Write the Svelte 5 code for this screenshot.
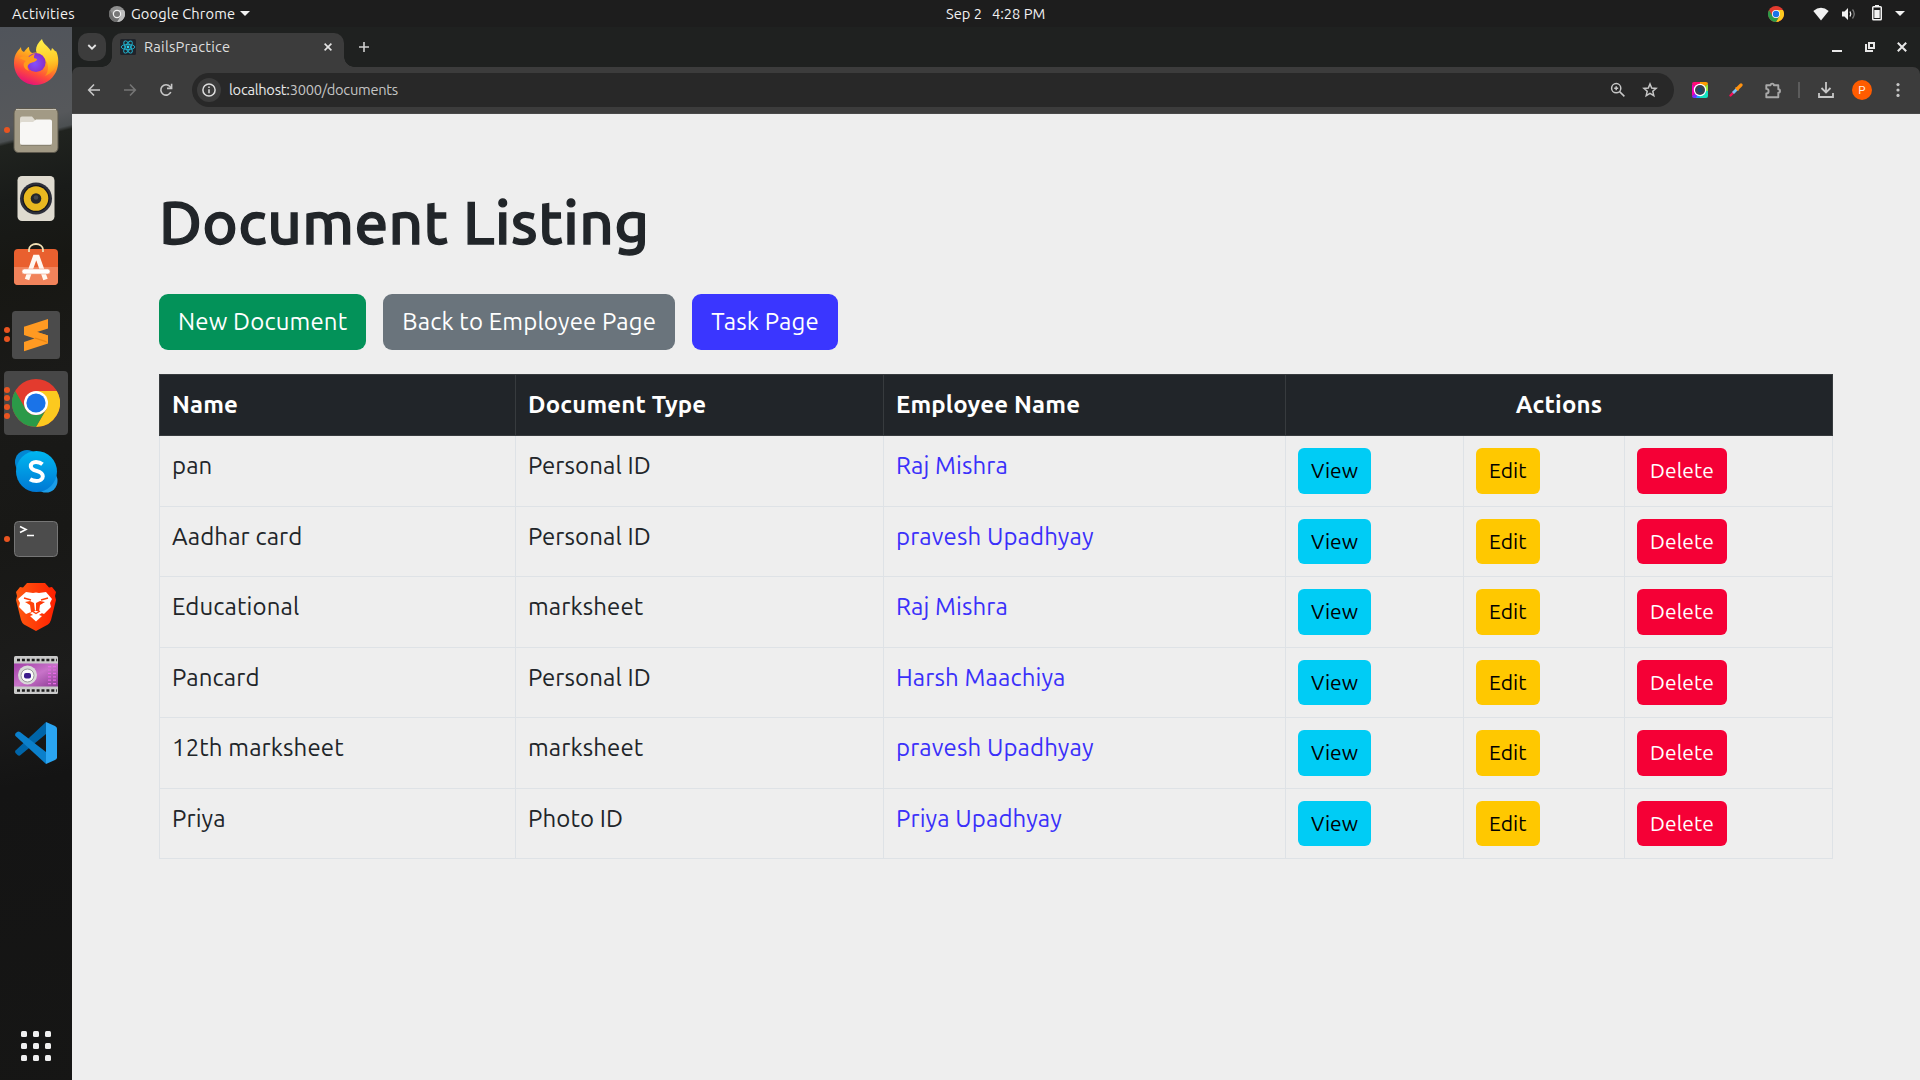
<script>
  const documents = [
    { name: 'pan', type: 'Personal ID', employee: 'Raj Mishra' },
    { name: 'Aadhar card', type: 'Personal ID', employee: 'pravesh Upadhyay' },
    { name: 'Educational', type: 'marksheet', employee: 'Raj Mishra' },
    { name: 'Pancard', type: 'Personal ID', employee: 'Harsh Maachiya' },
    { name: '12th marksheet', type: 'marksheet', employee: 'pravesh Upadhyay' },
    { name: 'Priya', type: 'Photo ID', employee: 'Priya Upadhyay' }
  ];

  // Launcher entries; `windows` is the number of open-window dots.
  const launchers = [
    { id: 'firefox', windows: 0 },
    { id: 'files', windows: 1 },
    { id: 'music', windows: 0 },
    { id: 'software', windows: 0 },
    { id: 'sublime', windows: 2 },
    { id: 'chrome', windows: 4 },
    { id: 'skype', windows: 0 },
    { id: 'terminal', windows: 1 },
    { id: 'brave', windows: 0 },
    { id: 'video', windows: 0 },
    { id: 'vscode', windows: 0 }
  ];
</script>

{#snippet chromeLogo(size)}
  <svg width={size} height={size} viewBox="0 0 48 48">
    <circle cx="24" cy="24" r="24" fill="#e33b2e" />
    <path d="M24 12H44.8A24 24 0 0 1 24 48L34.4 30Z" fill="#fcc91f" />
    <path d="M3.2 12 13.6 30A12 12 0 0 0 34.4 30L24 48A24 24 0 0 1 3.2 12Z" fill="#2b9a48" />
    <circle cx="24" cy="24" r="12" fill="#fff" />
    <circle cx="24" cy="24" r="9.6" fill="#1a73e8" />
  </svg>
{/snippet}

{#snippet appIcon(id)}
  {#if id === 'firefox'}
    <svg width="48" height="48" viewBox="0 0 48 48">
      <defs>
        <linearGradient id="ffBody" x1=".8" y1=".05" x2=".35" y2="1">
          <stop offset="0" stop-color="#ffe226" /><stop offset=".38" stop-color="#ff9a1f" /><stop offset=".7" stop-color="#ff4b3b" /><stop offset="1" stop-color="#e5107a" />
        </linearGradient>
        <linearGradient id="ffTail" x1=".5" y1="0" x2=".6" y2="1">
          <stop offset="0" stop-color="#fff04a" /><stop offset=".6" stop-color="#ffc928" /><stop offset="1" stop-color="#ff8a16" />
        </linearGradient>
        <radialGradient id="ffGlobe" cx=".45" cy=".55" r=".6">
          <stop offset="0" stop-color="#8250ff" /><stop offset="1" stop-color="#8a2bc2" />
        </radialGradient>
      </defs>
      <path d="M9 9c0 3 1 4 3 5 2-3 4-5 5-5 0 3 1 5 3 6 3-1 9-1 13 3l11-5c3 6 3 14 0 21-4 8-12 13-20 13C12 47 2 38 2 25c0-5 1-8 3-11 1-2 3-3 4-5z" fill="url(#ffBody)" />
      <path d="M30 1c-4 4-6 7-6 11 0 2 1 3 2 4 5 2 10 7 10 13 0 4-1 7-3 9 7-3 11-8 12-14 1-6-1-11-5-14l-1 3c-3-5-8-7-9-12z" fill="url(#ffTail)" />
      <circle cx="24" cy="24.500" r="9.600" fill="url(#ffGlobe)" />
      <path d="M7 20c4-2 7-2 10-1 1-1 4-3 6-3-1 1-1 2-1 4l3 1c0 3-5 3-8 5-2 2-2 4 0 7-6-2-7-8-3-10z" fill="#ff9b1c" />
    </svg>
  {:else if id === 'files'}
    <svg width="46" height="46" viewBox="0 0 46 46">
      <rect x="1" y="1.500" width="44" height="44" rx="4.500" fill="#a29a85" stroke="#5d584d" />
      <path d="M3 2.500H43" stroke="#c7c2b4" />
      <path d="M7 15V11.500a2 2 0 0 1 2-2h10l3 3.500v6H7Z" fill="#dedad0" />
      <path d="M7 17a2 2 0 0 1 2-2h11l3-2.500h14a2 2 0 0 1 2 2V36a2 2 0 0 1-2 2H9a2 2 0 0 1-2-2Z" fill="#f8f7f5" />
      <path d="M8 38.300h30" stroke="#847d6c" />
    </svg>
  {:else if id === 'music'}
    <svg width="38" height="46" viewBox="0 0 38 46">
      <rect x=".5" y="1" width="37" height="45" rx="4.500" fill="#dfdbd0" />
      <circle cx="19" cy="23.500" r="16" fill="#2d2f3a" />
      <circle cx="19" cy="23.500" r="13.500" fill="#14151c" />
      <circle cx="19" cy="23.500" r="12.300" fill="#e8b820" />
      <circle cx="19" cy="23.500" r="5.300" fill="#25272b" />
      <circle cx="19" cy="22.500" r="2.300" fill="#44474b" />
    </svg>
  {:else if id === 'software'}
    <svg width="46" height="46" viewBox="0 0 46 46">
      <rect x="1" y="6" width="44" height="36" rx="4" fill="#e9602f" />
      <path d="M1 24h44v14a4 4 0 0 1-4 4H5a4 4 0 0 1-4-4Z" fill="#f1835b" />
      <path d="M16 9V6.500a7 5.500 0 0 1 14 0V9" fill="none" stroke="#f0dfb4" stroke-width="1.800" />
      <path d="M14 36.500 22 14H24.500L32.500 36.500" fill="none" stroke="#fff7f0" stroke-width="4.600" />
      <rect x="9" y="26" width="28" height="5" rx="2.500" fill="#fff" stroke="#f0a080" stroke-width=".6" />
    </svg>
  {:else if id === 'sublime'}
    <svg width="48" height="48" viewBox="0 0 48 48">
      <rect width="48" height="48" rx="3.500" fill="#4b4b4b" />
      <path d="M12 15.700 36 8v9.500L25 21l11 3.500v8L12 40.200V31l10.500-3.500L12 24Z" fill="#ff9a22" />
      <path d="M22.500 27.500 36 32l-6-6.500-5-2z" fill="#e98513" />
      <path d="M12 15.700 25 21l11 3.500v6l-24-7.500z" fill="#ff9a22" />
    </svg>
  {:else if id === 'chrome'}
    {@render chromeLogo(48)}
  {:else if id === 'skype'}
    <svg width="44" height="44" viewBox="0 0 44 44">
      <defs><linearGradient id="sk" x1="0" y1="0" x2="0" y2="1"><stop offset="0" stop-color="#00b7f0" /><stop offset="1" stop-color="#0078d4" /></linearGradient></defs>
      <circle cx="13" cy="13" r="12" fill="#0386d2" />
      <circle cx="32" cy="32" r="11.500" fill="#1b9de8" />
      <circle cx="22.500" cy="22.500" r="20.500" fill="url(#sk)" />
      <path d="M28.500 15.200c-2.200-1.800-4.500-2.200-6.500-2.200-3 0-5.200 1.600-5.200 4.200 0 6 12 3.500 12 10 0 3-2.800 4.800-6.300 4.800-2.500 0-4.800-.7-6.500-1.800" fill="none" stroke="#fff" stroke-width="4" />
    </svg>
  {:else if id === 'terminal'}
    <svg width="46" height="38" viewBox="0 0 46 38">
      <rect x="1.500" y="1.500" width="43" height="35" rx="4" fill="#4c4c4c" stroke="#767676" />
      <path d="M7 6.500l6 3-6 3M14 15.500h7" fill="none" stroke="#fff" stroke-width="1.600" />
    </svg>
  {:else if id === 'brave'}
    <svg width="42" height="48" viewBox="0 0 42 48">
      <defs><linearGradient id="br" x1="0" x2="1"><stop offset="0" stop-color="#ff5a10" /><stop offset="1" stop-color="#ff1f00" /></linearGradient></defs>
      <path d="M12 0H30l4 4.500 3-.5 4 5-1 4 1 4-5 20q-1 3-3 4.500L21 48 9 41.500Q7 40 6 37L1 17l1-4-1-4 4-5 3 .5Z" fill="url(#br)" />
      <path d="M11 9l7 1 3-.5 3 .5 7-1 6 7-2 4 1 4-7 7-5-2 1-7 5-3-5-1-4 2v7l-1 1h2l5 2-6 4-6-4 5-2-1-8-4-2-5 1 5 3 1 7-5 2-7-7 1-4-2-4Z" fill="#fff" />
      <path d="M15 33l6-2 6 2-6 5.500Z" fill="#fff" />
      <path d="M9 15l7 2M33 15l-7 2M17 28l4 2.500 4-2.500" fill="none" stroke="#ff3d08" stroke-width="1.400" />
    </svg>
  {:else if id === 'video'}
    <svg width="44" height="38" viewBox="0 0 44 38">
      <defs><linearGradient id="vd" x1="0" x2="1" y2="1"><stop offset="0" stop-color="#a13fa6" /><stop offset=".5" stop-color="#c873c9" /><stop offset="1" stop-color="#8b3a93" /></linearGradient></defs>
      <rect width="44" height="38" rx="1.500" fill="#c9c9c9" />
      <rect y="7.500" width="44" height="23" fill="url(#vd)" />
      <path d="M3 4H43M3 34.500H43" stroke="#1a1a1a" stroke-width="2.400" stroke-dasharray="3 1.900" />
      <path d="M35.500 10V30M40.500 10V30" stroke="#e86ae6" stroke-width="3" stroke-dasharray="1.200 2.200" />
      <circle cx="13.500" cy="19" r="9.500" fill="#d9d9d9" />
      <circle cx="13.500" cy="19.500" r="6.500" fill="#fafafa" stroke="#999" />
      <rect x="10" y="17" width="7" height="5.500" rx="2" fill="#3c1c8c" />
    </svg>
  {:else}
    <svg width="44" height="44" viewBox="0 0 44 44">
      <path d="M32 1v12L6 34.500Q4.500 35 3.500 34L1.500 32Q.5 30.500 1.500 29.500Z" fill="#0065a9" />
      <path d="M32 43V31L6 11q-1.500-1-3 0L1.500 12.500q-1 1.500 0 2.500Z" fill="#0b80cc" />
      <path d="M32 1l9 4q2 1 2 2.500v29q0 1.500-2 2.500l-9 4Z" fill="#2aa5f2" />
    </svg>
  {/if}
{/snippet}

<div class="desktop">
  <header class="topbar">
    <div class="top-left">
      <span class="activities">Activities</span>
      <span class="appmenu">
        <svg width="16" height="16" viewBox="0 0 16 16">
          <circle cx="8" cy="8" r="8" fill="#8f8f8f" />
          <path d="M8 4h7A8 8 0 0 1 8 16l3.500-6z" fill="#bdbdbd" />
          <path d="M1 4l3.500 6A4 4 0 0 0 11.500 10L8 16A8 8 0 0 1 1 4z" fill="#6f6f6f" />
          <circle cx="8" cy="8" r="4.200" fill="#f2f2f2" /><circle cx="8" cy="8" r="3" fill="#777" />
        </svg>
        <span class="appname">Google Chrome</span>
        <i class="caret"></i>
      </span>
    </div>
    <div class="clock"><span>Sep 2</span><span>4:28 PM</span></div>
    <div class="status">
      {@render chromeLogo(16)}
      <svg class="wifi" width="16" height="14" viewBox="0 0 16 14"><path d="M.3 4Q8-2.500 15.700 4L8 13.500Z" fill="#f2f2f2" /></svg>
      <svg class="volume" width="16" height="14" viewBox="0 0 16 14">
        <path d="M1 4.500h2.500L7 1v12L3.500 9.500H1Z" fill="#f2f2f2" />
        <path d="M9 4.500q1.600 2.500 0 5" fill="none" stroke="#f2f2f2" stroke-width="1.300" />
        <path d="M11.500 2.500q3.500 4.500 0 9" fill="none" stroke="#777" stroke-width="1.300" />
      </svg>
      <svg class="battery" width="10" height="16" viewBox="0 0 10 16"><path d="M3 0h4v2H3z" fill="#f2f2f2" /><rect x=".75" y="1.750" width="8.500" height="13" rx=".8" fill="none" stroke="#f2f2f2" stroke-width="1.500" /><path d="M2.300 5h5.400v8H2.300z" fill="#f2f2f2" /></svg>
      <i class="caret"></i>
    </div>
  </header>

  <div class="workspace">
    <nav class="dock">
      {#each launchers as app}
        <div class="slot">
          <div class="dots">{#each Array(app.windows) as _}<i></i>{/each}</div>
          <div class="tile" class:active={app.id === 'chrome'}>{@render appIcon(app.id)}</div>
        </div>
      {/each}
      <div class="apps">{#each Array(9) as _}<i></i>{/each}</div>
    </nav>

    <section class="browser">
      <div class="tabstrip">
        <div class="tabsearch"><svg width="10" height="8" viewBox="0 0 10 8"><path d="M1.300 2 5 5.700 8.700 2" fill="none" stroke="#e3e3e3" stroke-width="1.800" /></svg></div>
        <div class="tab">
          <svg width="16" height="16" viewBox="0 0 16 16">
            <rect width="16" height="16" rx="1.500" fill="#20232a" />
            <g fill="none" stroke="#21b4d0" stroke-width=".9">
              <ellipse cx="8" cy="8" rx="6.800" ry="2.600" />
              <ellipse cx="8" cy="8" rx="6.800" ry="2.600" transform="rotate(60 8 8)" />
              <ellipse cx="8" cy="8" rx="6.800" ry="2.600" transform="rotate(120 8 8)" />
            </g>
            <circle cx="8" cy="8" r="1.400" fill="#2ad4f0" />
          </svg>
          <span class="title">RailsPractice</span>
          <svg class="close" width="8" height="8" viewBox="0 0 8 8"><path d="M.6.6l6.800 6.800M7.400.6.6 7.400" stroke="#e3e3e3" stroke-width="1.600" /></svg>
        </div>
        <svg class="plus" width="10" height="10" viewBox="0 0 10 10"><path d="M5 0v10M0 5h10" stroke="#d0d0d0" stroke-width="1.600" /></svg>
        <div class="winctl">
          <svg width="10" height="10" viewBox="0 0 10 10"><path d="M0 9h10" stroke="#e8e8e8" stroke-width="2" /></svg>
          <svg width="10" height="10" viewBox="0 0 10 10"><path d="M4 1h5v5H4zM1 2v7h7" fill="none" stroke="#e8e8e8" stroke-width="2" /></svg>
          <svg width="10" height="10" viewBox="0 0 10 10"><path d="M.8.8l8.400 8.400M9.200.8.800 9.200" stroke="#e8e8e8" stroke-width="2" /></svg>
        </div>
      </div>

      <div class="toolbar">
        <div class="navbtns">
          <svg width="14" height="14" viewBox="0 0 14 14"><path d="M13 7H2M7 1.500 1.700 7 7 12.500" fill="none" stroke="#c7c7c7" stroke-width="1.600" /></svg>
          <svg width="14" height="14" viewBox="0 0 14 14"><path d="M1 7h11M7 1.500 12.300 7 7 12.500" fill="none" stroke="#757575" stroke-width="1.600" /></svg>
          <svg width="14" height="14" viewBox="0 0 14 14"><path d="M11.800 9A5.200 5.200 0 1 1 11 3.600L12.300 5" fill="none" stroke="#c7c7c7" stroke-width="1.600" /><path d="M12.600.8V5.400H8" fill="none" stroke="#c7c7c7" stroke-width="1.600" /></svg>
        </div>
        <div class="omnibox">
          <span class="info"><svg width="14" height="14" viewBox="0 0 14 14"><circle cx="7" cy="7" r="6.100" fill="none" stroke="#dedede" stroke-width="1.500" /><path d="M7 6.200v4M7 3.500v1.500" stroke="#dedede" stroke-width="1.500" /></svg></span>
          <span class="url"><b>localhost:</b>3000/documents</span>
          <svg class="mag" width="16" height="16" viewBox="0 0 16 16"><circle cx="6.200" cy="6.200" r="4.600" fill="none" stroke="#c7c7c7" stroke-width="1.500" /><path d="M9.600 9.600l4.800 4.800M6.200 4.200v4M4.200 6.200h4" stroke="#c7c7c7" stroke-width="1.500" /></svg>
          <svg class="star" width="16" height="16" viewBox="0 0 16 16"><path d="M8 2l1.700 4 4.400.4-3.300 2.900 1 4.300L8 11.300l-3.800 2.300 1-4.300L1.900 6.400 6.300 6Z" fill="none" stroke="#c7c7c7" stroke-width="1.500" /></svg>
        </div>
        <div class="extensions">
          <svg width="16" height="16" viewBox="0 0 16 16">
            <path d="M2 0h6v8L0 2Q0 0 2 0" fill="#ff0a74" /><path d="M8 0h6q2 0 2 2L8 8z" fill="#ff9c00" />
            <path d="M16 2v8L8 8z" fill="#9be83c" /><path d="M16 9v5q0 2-2 2H8V8z" fill="#12e2c0" />
            <path d="M8 16H2q-2 0-2-2L8 8z" fill="#7a2cff" /><path d="M8 16H4l4-8z" fill="#18a6ff" /><path d="M0 14V2l8 6z" fill="#f500b4" />
            <circle cx="8" cy="8" r="6.200" fill="#fff" /><circle cx="8" cy="8" r="5" fill="#39414f" /><circle cx="8" cy="8" r="2.300" fill="#17486b" />
          </svg>
          <svg class="picker" width="14" height="14" viewBox="0 0 14 14">
            <path d="M1.500 12.500 5 9" stroke="#f5105c" stroke-width="2.400" stroke-linecap="round" /><path d="M4 10l4.500-4.500" stroke="#7cc4f8" stroke-width="2.800" />
            <path d="M6.500 4.500l3 3" stroke="#f08a18" stroke-width="1.600" /><path d="M8.500 5.500l3.500-3.500" stroke="#ff9210" stroke-width="3.200" stroke-linecap="round" />
          </svg>
          <svg class="puzzle" width="17" height="17" viewBox="0 0 17 17"><path d="M1.300 3.300H5.500a1.700 1.700 0 0 1 3.400 0H13.300V7.200a1.700 1.700 0 0 1 0 3.400V15.200H1.300V11.500a2.300 2.300 0 0 0 0-4.600Z" fill="none" stroke="#a9a9a9" stroke-width="1.900" stroke-linejoin="round" /></svg>
          <i class="sep"></i>
          <svg class="download" width="16" height="16" viewBox="0 0 16 16"><path d="M8 0v10M3.500 6 8 10.500 12.500 6M1 11v4h14v-4" fill="none" stroke="#c7c7c7" stroke-width="1.800" /></svg>
          <span class="avatar">P</span>
          <svg class="more" width="4" height="14" viewBox="0 0 4 14"><g fill="#c7c7c7"><circle cx="2" cy="1.600" r="1.600" /><circle cx="2" cy="7" r="1.600" /><circle cx="2" cy="12.400" r="1.600" /></g></svg>
        </div>
      </div>

      <main class="page">
        <h1>Document Listing</h1>
        <div class="actions">
          <button class="btn green">New Document</button>
          <button class="btn grey">Back to Employee Page</button>
          <button class="btn blue">Task Page</button>
        </div>
        <div class="table">
          <div class="row head">
            <div>Name</div>
            <div>Document Type</div>
            <div>Employee Name</div>
            <div class="wide">Actions</div>
          </div>
          {#each documents as doc}
            <div class="row">
              <div>{doc.name}</div>
              <div>{doc.type}</div>
              <div class="link">{doc.employee}</div>
              <div><button class="sm view">View</button></div>
              <div><button class="sm edit">Edit</button></div>
              <div><button class="sm delete">Delete</button></div>
            </div>
          {/each}
        </div>
      </main>
    </section>
  </div>
</div>

<style>
  :global(body) { margin: 0; background: #eee; }
  .desktop { width: 1920px; height: 1080px; overflow: hidden; display: flex; flex-direction: column; font-family: Ubuntu, "Noto Sans", sans-serif; box-sizing: border-box; }
  .desktop :global(svg) { display: block; flex: none; }

  .topbar { height: 27px; background: #1d1d1d; color: #f2f2f2; font-size: 14.67px; line-height: 27px; display: grid; grid-template-columns: 946px auto 1fr; }
  .top-left, .appmenu, .status { display: flex; align-items: center; }
  .top-left { padding-left: 12px; }
  .activities { width: 97px; letter-spacing: .28px; }
  .appname { margin: 0 6px 0 6px; letter-spacing: .1px; }
  .clock { display: flex; gap: 10px; }
  .caret { border: 5px solid transparent; border-top-color: #f2f2f2; border-bottom: 0; }
  .appmenu .caret { margin-left: -1px; }
  .status { justify-content: flex-end; padding-right: 15px; }
  .wifi { margin-left: 29px; }
  .volume { margin-left: 12px; }
  .battery { margin: 0 13px 0 15px; position: relative; top: -1px; }

  .workspace { flex: 1; display: flex; min-height: 0; }
  .dock { width: 72px; padding: 1px 0 19px; box-sizing: border-box; display: flex; flex-direction: column; background: linear-gradient(166deg, #50545b 0, #56585b 98px, #4b4f51 112px, #20231f 116px, #191b19 170px, #171713 240px, #1a1a18 350px, #181816 500px, #1c1c1b 640px, #141414 740px, #161615 1060px); }
  .slot { height: 68.150px; display: flex; align-items: center; }
  .dots { width: 0; display: flex; flex-direction: column; gap: 2.700px; padding-left: 4px; }
  .dots i { width: 6px; height: 6px; border-radius: 50%; background: #e95420; position: relative; z-index: 1; }
  .tile { width: 64px; height: 64px; display: flex; align-items: center; justify-content: center; border-radius: 4px; }
  .tile.active { background: #474747; }
  .apps { margin: auto auto 0; display: grid; grid-template-columns: repeat(3, 6px); gap: 6px; }
  .apps i { width: 6px; height: 6px; border-radius: 1.500px; background: #f0f0f0; }

  .browser { flex: 1; min-width: 0; background: linear-gradient(#1f2120 60px, #eee 60px); }
  .tabstrip { height: 40px; background: #1f2120; display: flex; align-items: center; padding: 0 13px 0 6px; box-sizing: border-box; }
  .tabsearch { width: 28px; height: 28px; border-radius: 10px; background: #3c3c3c; display: flex; align-items: center; justify-content: center; }
  .tab { position: relative; align-self: flex-end; width: 232px; height: 34px; margin-left: 6px; padding: 0 12px 6px 8px; box-sizing: border-box; display: flex; align-items: center; background: #3c3c3c; border-radius: 10px 10px 0 0; }
  .tab::before, .tab::after { content: ""; position: absolute; bottom: 0; width: 10px; height: 10px; }
  .tab::before { left: -10px; background: radial-gradient(circle at 0 0, transparent 9.500px, #3c3c3c 10px); }
  .tab::after { right: -10px; background: radial-gradient(circle at 100% 0, transparent 9.500px, #3c3c3c 10px); }
  .title { margin-left: 8px; color: #dedede; font-size: 14.67px; line-height: 20px; letter-spacing: .24px; }
  .close { margin-left: auto; }
  .plus { margin-left: 15px; }
  .winctl { margin-left: auto; display: flex; gap: 22.500px; }

  .toolbar { height: 47px; box-sizing: border-box; border-bottom: 1px solid #484848; background: #3c3c3c; border-radius: 7px 7px 0 0; display: flex; align-items: center; padding-left: 15px; }
  .navbtns { display: flex; gap: 22px; }
  .omnibox { width: 1482px; height: 34px; margin-left: 19px; border-radius: 17px; background: #282828; display: flex; align-items: center; padding: 0 16px 0 5px; box-sizing: border-box; }
  .info { width: 24px; height: 24px; border-radius: 50%; background: #3c3c3c; display: flex; align-items: center; justify-content: center; }
  .url { margin-left: 8px; color: #c4c4c4; font-size: 14.67px; line-height: 20px; letter-spacing: -.26px; }
  .url b { font-weight: 400; color: #e8e8e8; }
  .mag { margin-left: auto; }
  .star { margin-left: 16px; }
  .extensions { flex: 1; display: flex; align-items: center; padding-left: 18px; }
  .picker { margin-left: 21px; }
  .puzzle { margin-left: 22px; }
  .sep { width: 2px; height: 16px; margin-left: 16px; background: #5c5c5c; }
  .download { margin-left: 18px; }
  .avatar { width: 20px; height: 20px; margin-left: 18px; border-radius: 50%; background: #ff5c00; color: #ffe9dc; font: 11.500px/20px Roboto, sans-serif; text-align: center; }
  .more { margin-left: 24px; }

  .page { height: 966px; box-sizing: border-box; padding: 72px 87px 0; color: #212529; font-size: 24px; line-height: 36px; letter-spacing: .12px; background: #eee; }
  h1 { margin: 0 0 36px; font-size: 60px; line-height: 72px; font-weight: 500; letter-spacing: .4px; -webkit-text-stroke: 1.300px #212529; }
  .actions { display: flex; gap: 17px; }
  .btn, .sm { border: 0; font: inherit; letter-spacing: inherit; display: block; }
  .btn { height: 56px; padding: 0 19px; border-radius: 9px; color: #fff; letter-spacing: .15px; }
  .green { background: #039259; }
  .grey { background: #6a747c; }
  .blue { background: #3a36ff; }
  .table { margin-top: 24px; width: 1674px; }
  .row { display: grid; grid-template-columns: 356px 368px 402px 178px 161px 1fr; height: 70.500px; box-sizing: border-box; border: solid #dee2e6; border-width: 0 1px 1px 0; }
  .row > div { padding: 12px; border-left: 1px solid #dee2e6; }
  .head { height: 62px; background: #212529; border: 1px solid #373b3e; border-left: 0; color: #fff; font-weight: 700; letter-spacing: .16px; }
  .head > div { border-color: #373b3e; }
  .head .wide { grid-column: span 3; text-align: center; }
  .link { color: #3a30fa; }
  .sm { height: 45.500px; padding: 0 13px 1.500px; border-radius: 6px; font-size: 21px; line-height: 30px; color: #000; }
  .view { background: #00ccf5; letter-spacing: 0; }
  .edit { background: #ffc800; }
  .delete { background: #f50036; color: #fff; }
</style>
